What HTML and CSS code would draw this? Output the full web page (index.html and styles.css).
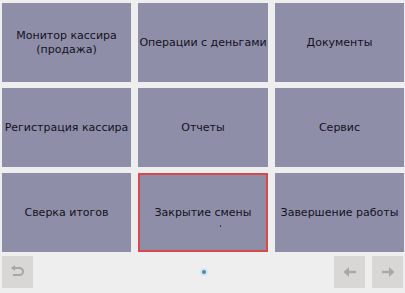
FILE: index.html
```html
<!DOCTYPE html>
<html>
<head>
<meta charset="utf-8">
<link rel="stylesheet" href="styles.css">
</head>
<body>
<div class="screen">
  <div class="grid">
    <div class="tile">Монитор кассира<br>(продажа)</div>
    <div class="tile">Операции с деньгами</div>
    <div class="tile">Документы</div>
    <div class="tile">Регистрация кассира</div>
    <div class="tile">Отчеты</div>
    <div class="tile">Сервис</div>
    <div class="tile">Сверка итогов</div>
    <div class="tile selected">Закрытие смены<span class="speck"></span></div>
    <div class="tile">Завершение работы</div>
  </div>
  <div class="bar">
    <div class="btn">
      <svg width="16" height="14" viewBox="0 0 16 14"><path d="M3 3 H9.5 A3.5 3.5 0 0 1 9.5 10 H3" fill="none" stroke="#a8a6a4" stroke-width="2"/><path d="M1 3 L5 0 V6 Z" fill="#a8a6a4"/></svg>
    </div>
    <div class="pager"><span class="dot"></span></div>
    <div class="btn">
      <svg width="14" height="12" viewBox="0 0 14 12"><path d="M13 6 H4" stroke="#aaa8a6" stroke-width="2.4"/><path d="M0.5 6 L6 1 V11 Z" fill="#aaa8a6"/></svg>
    </div>
    <div class="btn">
      <svg width="14" height="12" viewBox="0 0 14 12"><path d="M1 6 H10" stroke="#aaa8a6" stroke-width="2.4"/><path d="M13.5 6 L8 1 V11 Z" fill="#aaa8a6"/></svg>
    </div>
  </div>
</div>
</body>
</html>
```
FILE: styles.css
```css
html, body {
  margin: 0;
  padding: 0;
  background: #efeeee;
}
.screen {
  width: 405px;
  height: 293px;
  box-sizing: border-box;
  padding: 3px 2px 2px 2px;
  display: flex;
  flex-direction: column;
  font-family: "DejaVu Sans", sans-serif;
}
.grid {
  display: grid;
  grid-template-columns: 129px 130px 129px;
  grid-template-rows: 79px 79px 79px;
  column-gap: 7px;
  row-gap: 6px;
}
.tile {
  position: relative;
  background: #8f8ea8;
  color: #12121e;
  font-size: 11px;
  line-height: 14px;
  display: flex;
  align-items: center;
  justify-content: center;
  text-align: center;
}
.tile.selected {
  box-shadow: inset 0 0 0 2px #d9484c;
}
.speck {
  position: absolute;
  left: 82px;
  top: 52px;
  width: 1px;
  height: 2px;
  background: #3a3a50;
}
.bar {
  margin-top: 4px;
  display: flex;
  align-items: center;
  gap: 7px;
  height: 32px;
}
.btn {
  width: 31px;
  height: 32px;
  background: #d9d7d5;
  display: flex;
  align-items: center;
  justify-content: center;
}
.pager {
  flex: 1;
  display: flex;
  justify-content: center;
  align-items: center;
  padding-left: 40px;
}
.dot {
  width: 4px;
  height: 4px;
  border-radius: 50%;
  background: #4a8ab0;
  box-shadow: 0 0 0 2px #d4e6ef;
}
```
